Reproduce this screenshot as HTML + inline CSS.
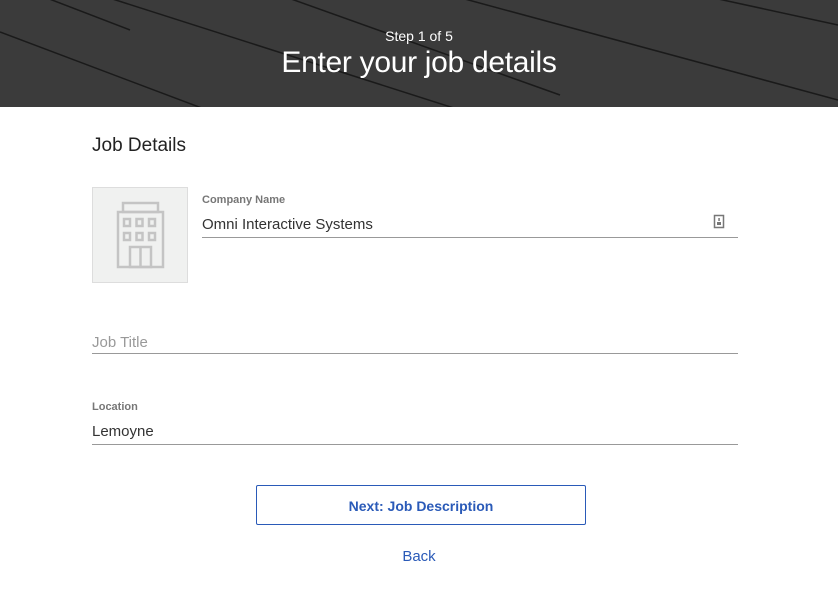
<!DOCTYPE html>
<html><head><style>
body{margin:0;width:838px;height:605px;background:#fff;font-family:"Liberation Sans",sans-serif;overflow:hidden;position:relative}
.hdr{position:absolute;left:0;top:0;width:838px;height:107px;background:#3b3b3b;overflow:hidden}
.t1{position:absolute;top:28px;width:100%;text-align:center;color:#fff;font-size:14px}
.t2{position:absolute;top:46px;width:100%;text-align:center;color:#fff;font-size:30px;letter-spacing:-0.3px}
.a{position:absolute;color:#333}
.line{position:absolute;left:92px;width:646px;height:1px;background:#999}
</style></head><body>
<div class="hdr">
<svg width="838" height="107" style="position:absolute;left:0;top:0">
<g stroke="#1a1a1a" stroke-width="1.5" fill="none">
<line x1="0" y1="32" x2="260" y2="130"/>
<line x1="100" y1="-5" x2="460" y2="110"/>
<line x1="280" y1="-5" x2="560" y2="95"/>
<line x1="450" y1="-5" x2="838" y2="100"/>
<line x1="700" y1="-5" x2="838" y2="25"/>
<line x1="0" y1="-20" x2="130" y2="30"/>
</g></svg>
<div class="t1">Step 1 of 5</div>
<div class="t2">Enter your job details</div>
</div>
<div class="a" style="left:92px;top:135px;font-size:19px;color:#222">Job Details</div>
<div style="position:absolute;left:92px;top:187px;width:94px;height:94px;border:1px solid #ddd;background:#f0f1f0"></div>
<svg style="position:absolute;left:92px;top:187px" width="96" height="96"><g fill="none" stroke="#c4c4c4" stroke-width="2.5">
<rect x="31" y="16" width="35" height="9"/><rect x="26" y="25" width="45" height="55"/>
<rect x="32" y="32" width="6" height="7"/><rect x="44.5" y="32" width="6" height="7"/><rect x="57" y="32" width="6" height="7"/>
<rect x="32" y="46" width="6" height="7"/><rect x="44.5" y="46" width="6" height="7"/><rect x="57" y="46" width="6" height="7"/>
<rect x="38" y="60" width="21" height="20"/><line x1="48.5" y1="60" x2="48.5" y2="80"/></g></svg>
<div class="a" style="left:202px;top:194px;font-size:11px;color:#777;font-weight:bold">Company Name</div>
<div class="a" style="left:202px;top:216px;font-size:15px">Omni Interactive Systems</div>
<svg style="position:absolute;left:713px;top:214px" width="12" height="16"><rect x="1.5" y="1.5" width="9" height="12" fill="none" stroke="#777" stroke-width="1.5"/><rect x="4" y="8" width="4" height="3" fill="#777"/><rect x="5.3" y="4" width="1.5" height="3" fill="#777"/></svg>
<div class="line" style="left:202px;width:536px;top:237px"></div>
<div class="a" style="left:92px;top:334px;font-size:15px;color:#999">Job Title</div>
<div class="line" style="top:353px"></div>
<div class="a" style="left:92px;top:401px;font-size:11px;color:#777;font-weight:bold">Location</div>
<div class="a" style="left:92px;top:423px;font-size:15px">Lemoyne</div>
<div class="line" style="top:444px"></div>
<div style="position:absolute;left:256px;top:485px;width:328px;height:38px;border:1px solid #2a5ab8;border-radius:2px;text-align:center;line-height:40px;color:#2a5ab8;font-weight:bold;font-size:14px">Next: Job Description</div>
<div class="a" style="left:0;width:838px;text-align:center;top:548px;font-size:15px;color:#2a5ab8">Back</div>
</body></html>
